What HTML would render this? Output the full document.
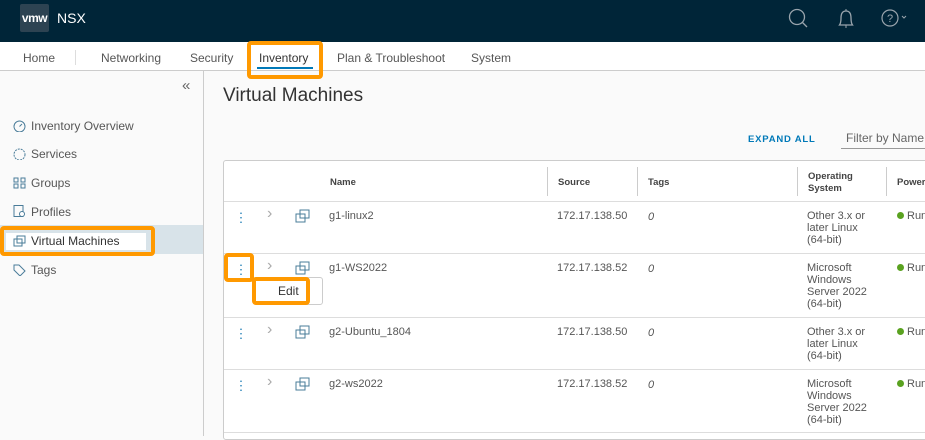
<!DOCTYPE html>
<html><head><style>
*{box-sizing:border-box;margin:0;padding:0}
body{width:925px;height:436px;overflow:hidden;font-family:"Liberation Sans",sans-serif;background:#fafafa;position:relative;color:#565656}
.a{position:absolute}
.hdr{left:0;top:0;width:925px;height:42px;background:#002538}
.nav{left:0;top:42px;width:925px;height:29px;background:#fff;border-bottom:1px solid #ccc}
.nav span{position:absolute;top:9px;font-size:12px;color:#565656}
.side{left:0;top:71px;width:204px;height:365px;background:#fafafa;border-right:1px solid #ccc}
.si{position:absolute;left:31px;font-size:12px;color:#565656}
.ic{position:absolute;left:13px;width:13px;height:12px}
.tbl{left:223px;top:160px;width:710px;height:280px;background:#fff;border:1px solid #ccc;border-radius:3px}
.hl{position:absolute;left:0;width:710px;border-top:1px solid #ddd}
.t{position:absolute;font-size:11px;color:#565656;line-height:12px}
.th{position:absolute;font-size:9.5px;color:#444;font-weight:bold;line-height:12px}
.sep{position:absolute;top:6px;height:29px;border-left:1px solid #ccc}
.dot{position:absolute;width:7px;height:7px;border-radius:50%;background:#5aa220}
.keb{position:absolute;width:2px;height:12px;background:radial-gradient(circle,#3d8fc0 0.7px,transparent 1px) 0 0/2px 4.5px}
.chev{position:absolute;left:44px;top:5px;color:#aaa;font-size:16px;line-height:16px}
.or{position:absolute;border:4px solid #f90;border-radius:4px}
</style></head><body>
<div class="a hdr">
<div class="a" style="left:20px;top:4px;width:29px;height:28px;background:#2d4352;border-radius:2px;color:#fff;font-size:12px;font-weight:bold;line-height:28px;text-align:center;letter-spacing:-0.5px">vmw</div>
<div class="a" style="left:57px;top:10px;color:#fff;font-size:14px">NSX</div>
<svg class="a" style="left:788px;top:8px" width="24" height="24"><circle cx="9" cy="9" r="7.5" fill="none" stroke="#9aa5ad" stroke-width="1.3"/><line x1="14.5" y1="14.5" x2="19" y2="19" stroke="#9aa5ad" stroke-width="1.3"/></svg>
<svg class="a" style="left:836px;top:8px" width="20" height="22"><path d="M3.5 17 Q5 15 5 10 Q5 3 10 3 Q15 3 15 10 Q15 15 16.5 17 Z" fill="none" stroke="#9aa5ad" stroke-width="1.3"/><line x1="10" y1="1" x2="10" y2="3" stroke="#9aa5ad"/><line x1="10" y1="17" x2="10" y2="20" stroke="#9aa5ad"/></svg>
<svg class="a" style="left:880px;top:8px" width="30" height="22"><circle cx="10" cy="10" r="8" fill="none" stroke="#9aa5ad" stroke-width="1.2"/><text x="10" y="14" font-size="11" fill="#9aa5ad" text-anchor="middle" font-family="Liberation Sans">?</text><path d="M22 8 l2 2 l2 -2" fill="none" stroke="#9aa5ad"/></svg>
</div>
<div class="a nav">
<span style="left:23px">Home</span>
<div class="a" style="left:75px;top:8px;height:15px;border-left:1px solid #ddd"></div>
<span style="left:101px">Networking</span>
<span style="left:190px">Security</span>
<span style="left:259px;color:#333">Inventory</span>
<div class="a" style="left:257px;top:25px;width:56px;height:2px;background:#0079b8"></div>
<span style="left:337px">Plan &amp; Troubleshoot</span>
<span style="left:471px">System</span>
</div>
<div class="or" style="left:247px;top:41px;width:76px;height:38px"></div>
<div class="a side">
<div class="a" style="left:182px;top:6px;font-size:15px;color:#666">«</div>
<div class="a" style="left:0;top:154px;width:203px;height:29px;background:#d8e3e9"></div>
</div>
<div class="a" style="left:6px;top:233px;width:140px;height:17px;background:#fff"></div>
<svg class="ic" style="top:120px"><circle cx="6.5" cy="6.5" r="5.5" fill="none" stroke="#4a7c99"/><line x1="6.5" y1="6.5" x2="9" y2="4" stroke="#4a7c99"/></svg>
<div class="si" style="top:119px">Inventory Overview</div>
<svg class="ic" style="top:148px"><circle cx="6.5" cy="6.5" r="5.5" fill="none" stroke="#4a7c99" stroke-dasharray="2 1"/></svg>
<div class="si" style="top:147px">Services</div>
<svg class="ic" style="top:177px"><rect x="1" y="1" width="4" height="4" fill="none" stroke="#4a7c99"/><rect x="8" y="1" width="4" height="4" fill="none" stroke="#4a7c99"/><rect x="1" y="7" width="4" height="4" fill="none" stroke="#4a7c99"/><rect x="8" y="7" width="4" height="4" fill="none" stroke="#4a7c99"/></svg>
<div class="si" style="top:176px">Groups</div>
<svg class="ic" style="top:205px"><rect x="1" y="0.5" width="9" height="11" fill="none" stroke="#4a7c99"/><circle cx="9" cy="9" r="2.5" fill="#fff" stroke="#4a7c99"/></svg>
<div class="si" style="top:205px">Profiles</div>
<svg class="ic" style="top:235px"><rect x="1" y="4" width="8" height="7" fill="none" stroke="#4a7c99"/><rect x="4" y="1" width="8" height="7" fill="none" stroke="#4a7c99"/></svg>
<div class="si" style="top:234px;color:#333">Virtual Machines</div>
<svg class="ic" style="top:264px"><path d="M1 1 h5 l6 6 l-5 5 l-6 -6z" fill="none" stroke="#4a7c99"/></svg>
<div class="si" style="top:263px">Tags</div>
<div class="or" style="left:0;top:226px;width:155px;height:30px"></div>
<div class="a" style="left:223px;top:85px;font-size:19px;color:#333">Virtual Machines</div>
<div class="a" style="left:748px;top:134px;font-size:9.5px;font-weight:bold;color:#0079b8;letter-spacing:0.8px">EXPAND ALL</div>
<div class="a" style="left:841px;top:131px;font-size:12px;color:#666;width:90px;height:18px;border-bottom:1px solid #999;padding-left:5px">Filter by Name,</div>
<div class="a tbl">
<div class="th" style="left:106px;top:16px">Name</div>
<div class="sep" style="left:323px"></div><div class="th" style="left:334px;top:16px">Source</div>
<div class="sep" style="left:413px"></div><div class="th" style="left:424px;top:16px">Tags</div>
<div class="sep" style="left:573px"></div><div class="th" style="left:584px;top:10px">Operating<br>System</div>
<div class="sep" style="left:662px"></div><div class="th" style="left:673px;top:16px">Power</div>
<div class="hl" style="top:40px"></div>
<div class="hl" style="top:92px"></div>
<div class="hl" style="top:156px"></div>
<div class="hl" style="top:208px"></div>
<div class="hl" style="top:271px"></div>
</div>
<div class="a" style="left:223px;top:201px;width:710px">
<div class="keb" style="left:17px;top:10px"></div><div class="chev">›</div>
<svg class="a" style="left:72px;top:7px" width="16" height="16"><rect x="1" y="6" width="9" height="8" fill="none" stroke="#4a7c99"/><rect x="5" y="2" width="9" height="8" fill="none" stroke="#4a7c99"/></svg>
<div class="t" style="left:106px;top:9px">g1-linux2</div><div class="t" style="left:334px;top:9px">172.17.138.50</div><div class="t" style="left:425px;top:10px;font-style:italic">0</div>
<div class="t" style="left:584px;top:9px">Other 3.x or<br>later Linux<br>(64-bit)</div><div class="dot" style="left:674px;top:11px"></div><div class="t" style="left:684px;top:9px">Run</div>
</div>
<div class="a" style="left:223px;top:253px;width:710px">
<div class="keb" style="left:17px;top:10px"></div><div class="chev">›</div>
<svg class="a" style="left:72px;top:7px" width="16" height="16"><rect x="1" y="6" width="9" height="8" fill="none" stroke="#4a7c99"/><rect x="5" y="2" width="9" height="8" fill="none" stroke="#4a7c99"/></svg>
<div class="t" style="left:106px;top:9px">g1-WS2022</div><div class="t" style="left:334px;top:9px">172.17.138.52</div><div class="t" style="left:425px;top:10px;font-style:italic">0</div>
<div class="t" style="left:584px;top:9px">Microsoft<br>Windows<br>Server 2022<br>(64-bit)</div><div class="dot" style="left:674px;top:11px"></div><div class="t" style="left:684px;top:9px">Run</div>
</div>
<div class="a" style="left:223px;top:317px;width:710px">
<div class="keb" style="left:17px;top:10px"></div><div class="chev">›</div>
<svg class="a" style="left:72px;top:7px" width="16" height="16"><rect x="1" y="6" width="9" height="8" fill="none" stroke="#4a7c99"/><rect x="5" y="2" width="9" height="8" fill="none" stroke="#4a7c99"/></svg>
<div class="t" style="left:106px;top:9px">g2-Ubuntu_1804</div><div class="t" style="left:334px;top:9px">172.17.138.50</div><div class="t" style="left:425px;top:10px;font-style:italic">0</div>
<div class="t" style="left:584px;top:9px">Other 3.x or<br>later Linux<br>(64-bit)</div><div class="dot" style="left:674px;top:11px"></div><div class="t" style="left:684px;top:9px">Run</div>
</div>
<div class="a" style="left:223px;top:369px;width:710px">
<div class="keb" style="left:17px;top:10px"></div><div class="chev">›</div>
<svg class="a" style="left:72px;top:7px" width="16" height="16"><rect x="1" y="6" width="9" height="8" fill="none" stroke="#4a7c99"/><rect x="5" y="2" width="9" height="8" fill="none" stroke="#4a7c99"/></svg>
<div class="t" style="left:106px;top:9px">g2-ws2022</div><div class="t" style="left:334px;top:9px">172.17.138.52</div><div class="t" style="left:425px;top:10px;font-style:italic">0</div>
<div class="t" style="left:584px;top:9px">Microsoft<br>Windows<br>Server 2022<br>(64-bit)</div><div class="dot" style="left:674px;top:11px"></div><div class="t" style="left:684px;top:9px">Run</div>
</div>
<div class="a" style="left:255px;top:277px;width:68px;height:28px;background:#fff;border:1px solid #ccc;border-radius:3px"></div>
<div class="or" style="left:252px;top:277px;width:58px;height:28px"></div>
<div class="a" style="left:278px;top:284px;font-size:12px;color:#333">Edit</div>
<div class="or" style="left:224px;top:253px;width:30px;height:29px;background:#fff"></div>
<div class="keb" style="left:240px;top:263px"></div>
</body></html>
